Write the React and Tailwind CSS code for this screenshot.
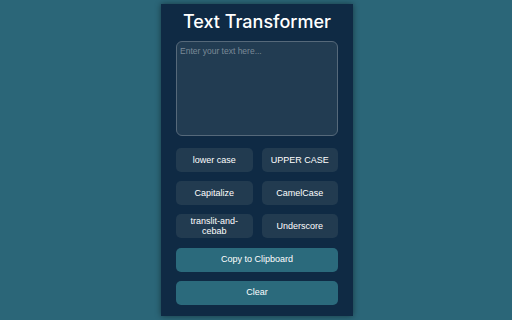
export default function App() {
  const buttons = ['lower case', 'UPPER CASE', 'Capitalize', 'CamelCase', 'translit-and-cebab', 'Underscore'];
  return (
    <div className="w-[512px] h-[320px] bg-[#2b6678] flex justify-center pt-[4px] pl-[2px]" style={{ fontFamily: '"Liberation Sans", Arial, sans-serif' }}>
      <div className="w-[192px] h-[312px] bg-[#0f2a44] shadow-[0_0_6px_rgba(0,0,0,0.45)] px-[15px] flex flex-col">
        <h1 className="text-white text-[18px] leading-none text-center mt-[9px] whitespace-nowrap font-medium" style={{ fontFamily: 'Inter, "Noto Sans", sans-serif' }}>
          Text Transformer
        </h1>
        <textarea
          placeholder="Enter your text here..."
          className="mt-[10px] h-[95px] w-full resize-none rounded-[6px] border border-[#56697a] bg-[#223c52] px-[3px] py-[3px] text-[8.5px] text-white placeholder-[#7b8a97] outline-none"
        />
        <div className="grid grid-cols-2 gap-x-[9px] gap-y-[9px] mt-[12px]">
          {buttons.map((b) => (
            <button key={b} className="h-[24px] rounded-[5px] bg-[#223b50] text-white text-[9px] leading-[10px] px-[4px] flex items-center justify-center text-center">
              {b}
            </button>
          ))}
        </div>
        <button className="mt-[10px] h-[24px] w-full rounded-[5px] bg-[#2b6a7c] text-white text-[9px]">Copy to Clipboard</button>
        <button className="mt-[9px] h-[24px] w-full rounded-[5px] bg-[#2b6a7c] text-white text-[9px]">Clear</button>
      </div>
    </div>
  );
}
